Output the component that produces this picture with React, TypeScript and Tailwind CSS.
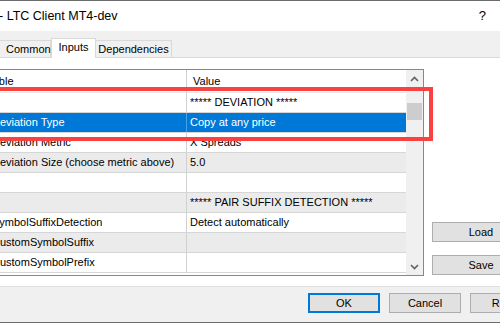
import React from 'react';

type Row = { name: string; value: string };

const ROWS: Row[] = [
  { name: '', value: '***** DEVIATION *****' },
  { name: 'Deviation Type', value: 'Copy at any price' },
  { name: 'Deviation Metric', value: 'X Spreads' },
  { name: 'Deviation Size (choose metric above)', value: '5.0' },
  { name: '', value: '' },
  { name: '', value: '***** PAIR SUFFIX DETECTION *****' },
  { name: 'SymbolSuffixDetection', value: 'Detect automatically' },
  { name: 'CustomSymbolSuffix', value: '' },
  { name: 'CustomSymbolPrefix', value: '' },
];

const SELECTED = 1;

function Chevron({ up }: { up?: boolean }) {
  return (
    <svg width="9" height="6" viewBox="0 0 9 6">
      <path
        d={up ? 'M1 5 L4.5 1.5 L8 5' : 'M1 1 L4.5 4.5 L8 1'}
        fill="none"
        stroke="#606060"
        strokeWidth="1.6"
      />
    </svg>
  );
}

function WinButton({ label, wide, primary }: { label: string; wide?: boolean; primary?: boolean }) {
  return (
    <div
      className={`h-[20px] flex items-center justify-center shrink-0 bg-[#e1e1e1] text-black ${
        wide ? 'w-[98px]' : 'w-[72px]'
      } ${primary ? 'border-2 border-[#0078d7]' : 'border border-[#adadad]'}`}
    >
      {label}
    </div>
  );
}

export default function App() {
  return (
    <div className="relative w-[500px] h-[323px] overflow-hidden bg-white font-['Liberation_Sans',Arial,sans-serif] text-[11px] text-black">
      <div className="h-px bg-[#6b6b6b]" />

      {/* title bar */}
      <div className="h-[30px] flex items-center justify-between bg-white">
        <span className="text-[12.5px] ml-[-1px]">- LTC Client MT4-dev</span>
        <span className="text-[13px] mr-[14px]">?</span>
      </div>

      {/* tab strip */}
      <div className="h-[27px] flex items-end bg-[#f0f0f0] border-b border-[#d9d9d9]">
        <div className="h-[17px] w-[57px] ml-[-6px] pl-[11px] flex items-center bg-[#f0f0f0] border border-b-0 border-[#d9d9d9]">
          Common
        </div>
        <div className="relative z-10 h-[20px] w-[45px] -mb-px pb-[3px] flex items-center justify-center bg-white border border-b-0 border-[#d9d9d9]">
          Inputs
        </div>
        <div className="h-[17px] w-[76px] flex items-center justify-center bg-[#f0f0f0] border border-b-0 border-l-0 border-[#d9d9d9]">
          Dependencies
        </div>
      </div>

      {/* tab page */}
      <div className="h-[228px] bg-white flex">
        <div className="mt-[11px] ml-[-20px] w-[444px] h-[207px] border border-[#828790] flex shrink-0">
          <div className="w-[425px] flex flex-col">
            <div className="h-[23px] flex items-center border-b border-[#e5e5e5]">
              <div className="w-[206px] h-full flex items-center border-r border-[#d0d0d0] pl-[12px]">
                <span className="ml-[-19px]">Variable</span>
              </div>
              <div className="flex-1 pl-[6px]">Value</div>
            </div>
            {ROWS.map((r, i) => {
              const sel = i === SELECTED;
              const bg = sel ? 'bg-[#0078d7] text-white' : i % 2 === 1 ? 'bg-[#ebebeb]' : 'bg-white';
              return (
                <div key={i} className={`h-[20px] flex items-center border-b border-[#d6d6d6] ${bg}`}>
                  <div
                    className={`w-[206px] h-full flex items-center pl-[11px] whitespace-nowrap border-r ${
                      sel ? 'border-[#4aa0e6]' : 'border-[#d0d0d0]'
                    }`}
                  >
                    {r.name}
                  </div>
                  <div className="flex-1 pl-[3px] whitespace-nowrap">{r.value}</div>
                </div>
              );
            })}
          </div>
          {/* scrollbar */}
          <div className="w-[17px] bg-[#f0f0f0] flex flex-col items-center">
            <div className="h-[17px] w-full flex items-center justify-center">
              <Chevron up />
            </div>
            <div className="mt-[16px] w-[15px] h-[17px] bg-[#cdcdcd]" />
            <div className="flex-1" />
            <div className="h-[17px] w-full flex items-center justify-center">
              <Chevron />
            </div>
          </div>
        </div>
        <div className="flex flex-col gap-[13px] ml-[8px] mt-[164px]">
          <WinButton label="Load" wide />
          <WinButton label="Save" wide />
        </div>
      </div>

      {/* footer */}
      <div className="h-[36px] bg-[#f0f0f0] border-t border-[#dfdfdf] flex items-start pt-[6px] pl-[308px] gap-[9px]">
        <WinButton label="OK" primary />
        <WinButton label="Cancel" />
        <WinButton label="Reset" />
      </div>
      <div className="h-px bg-[#6b6b6b]" />

      {/* annotation */}
      <div className="absolute left-[-10px] top-[87px] w-[443px] h-[54px] border-4 border-[#f94141]" />
    </div>
  );
}
